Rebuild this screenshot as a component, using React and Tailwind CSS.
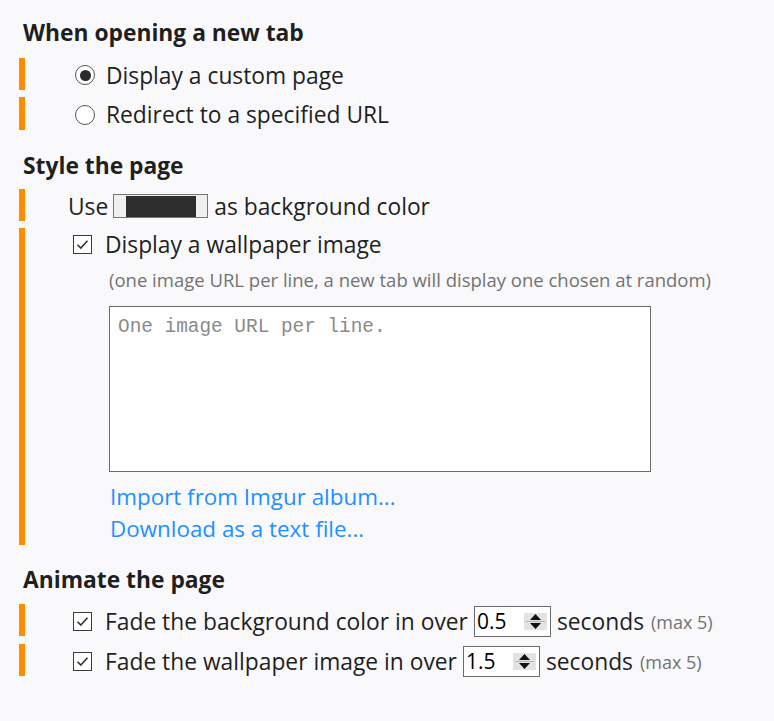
import React from "react";

function Bar() {
  return <div className="w-[6px] shrink-0 self-stretch bg-[#ff8c00]" />;
}

function Radio({ checked }) {
  return (
    <div className="flex h-[20px] w-[20px] shrink-0 items-center justify-center rounded-full border border-[#555] bg-white">
      {checked && <div className="h-[11px] w-[11px] rounded-full bg-[#2b2b2b]" />}
    </div>
  );
}

function Check() {
  return (
    <div className="flex h-[19px] w-[19px] shrink-0 items-center justify-center border-[1.5px] border-[#3a3a3a] bg-white">
      <svg width="13" height="11" viewBox="0 0 13 11" fill="none">
        <path d="M1.5 5.8 L4.8 9 L11.5 1.8" stroke="#333" strokeWidth="1.6" />
      </svg>
    </div>
  );
}

function NumberInput({ value, w }) {
  return (
    <div className={`flex h-[31px] shrink-0 items-center justify-between border border-[#6b6b6b] bg-white pl-[2px] pr-[3px] ${w}`}>
      <span className="text-[21px] leading-none text-black">{value}</span>
      <div className="flex h-[17px] w-[23px] flex-col items-center justify-center gap-[1px] bg-[#e3e3e3]">
        <svg width="11" height="6" viewBox="0 0 11 6"><path d="M5.5 0 L11 6 L0 6 Z" fill="#111" /></svg>
        <div className="h-[1px] w-[19px] bg-[#b5b5b5]" />
        <svg width="11" height="6" viewBox="0 0 11 6"><path d="M0 0 L11 0 L5.5 6 Z" fill="#111" /></svg>
      </div>
    </div>
  );
}

export default function App() {
  return (
    <div className="min-h-screen bg-[#f9f9fb] pl-[19px] pt-[19px] font-['Open_Sans',sans-serif] text-[#1f1f1f]">
      <h2 className="ml-[4px] h-[28px] text-[22.8px] font-bold leading-[28px]">When opening a new tab</h2>

      <div className="mt-[11px] flex h-[32px]">
        <Bar />
        <div className="flex items-center pl-[50px] pt-[2px]">
          <Radio checked />
          <span className="ml-[11px] pt-[2px] text-[22.8px]">Display a custom page</span>
        </div>
      </div>
      <div className="mt-[7px] flex h-[33px]">
        <Bar />
        <div className="flex items-center pl-[50px] pt-[2px]">
          <Radio />
          <span className="ml-[11px] pt-[2px] text-[22.8px]">Redirect to a specified URL</span>
        </div>
      </div>

      <h2 className="ml-[4px] mt-[22px] h-[28px] text-[22.8px] font-bold leading-[28px]">Style the page</h2>

      <div className="mt-[9px] flex h-[32px]">
        <Bar />
        <div className="flex items-center pl-[43px] pt-[2px]">
          <span className="pt-[2px] text-[22.8px]">Use</span>
          <div className="ml-[5px] flex h-[24px] w-[95px] items-center justify-center border border-[#767676] bg-[#efefef]">
            <div className="h-[21px] w-[70px] bg-[#2d2d2d]" />
          </div>
          <span className="ml-[6px] pt-[2px] text-[22.8px]">as background color</span>
        </div>
      </div>

      <div className="mt-[7px] flex">
        <Bar />
        <div className="flex flex-col pl-[48px] pt-[6px]">
          <div className="flex h-[20px] items-center">
            <Check />
            <span className="ml-[13px] pt-[3px] text-[22.8px]">Display a wallpaper image</span>
          </div>
          <div className="ml-[36px] mt-[14px] h-[24px] text-[18.5px] leading-[24px] text-[#737373]">
            (one image URL per line, a new tab will display one chosen at random)
          </div>
          <textarea
            className="ml-[36px] mt-[14px] h-[166px] w-[542px] resize-none border border-[#6b6b6b] bg-white px-[8px] py-[8px] font-['Liberation_Mono',monospace] text-[19.4px] leading-[24px] outline-none placeholder:text-[#8a8a8a]"
            placeholder="One image URL per line."
          />
          <a className="ml-[37px] mt-[9px] h-[32px] text-[22.4px] leading-[32px] text-[#1e90ff]">Import from Imgur album...</a>
          <a className="ml-[37px] h-[32px] text-[22.4px] leading-[32px] text-[#1e90ff]">Download as a text file...</a>
        </div>
      </div>

      <h2 className="ml-[4px] mt-[21px] h-[28px] text-[22.8px] font-bold leading-[28px]">Animate the page</h2>

      <div className="mt-[10px] flex h-[32px]">
        <Bar />
        <div className="flex items-center pl-[48px] pt-[2px]">
          <Check />
          <span className="ml-[13px] pt-[2px] text-[22.8px]">Fade the background color in over</span>
          <div className="ml-[6px]"><NumberInput value="0.5" w="w-[77px]" /></div>
          <span className="ml-[6px] pt-[2px] text-[22.8px]">seconds</span>
          <span className="ml-[7px] pt-[3px] text-[18px] text-[#737373]">(max 5)</span>
        </div>
      </div>
      <div className="mt-[8px] flex h-[32px]">
        <Bar />
        <div className="flex items-center pl-[48px] pt-[2px]">
          <Check />
          <span className="ml-[13px] pt-[2px] text-[22.8px]">Fade the wallpaper image in over</span>
          <div className="ml-[6px]"><NumberInput value="1.5" w="w-[77px]" /></div>
          <span className="ml-[6px] pt-[2px] text-[22.8px]">seconds</span>
          <span className="ml-[7px] pt-[3px] text-[18px] text-[#737373]">(max 5)</span>
        </div>
      </div>
    </div>
  );
}
